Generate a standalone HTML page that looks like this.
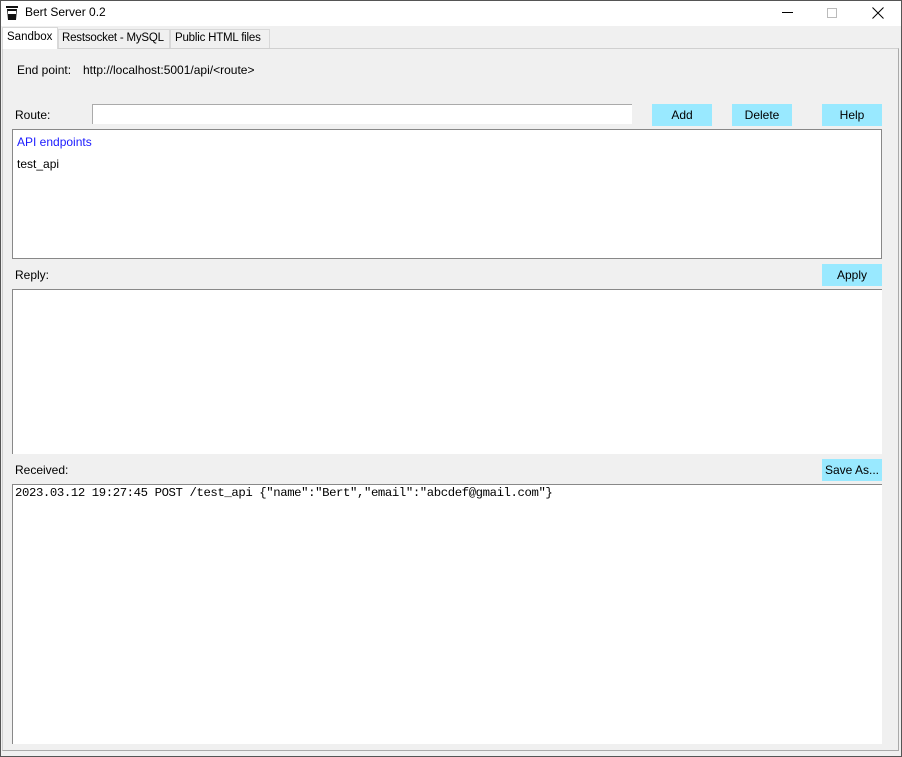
<!DOCTYPE html>
<html><head><meta charset="utf-8"><style>
*{margin:0;padding:0;box-sizing:border-box}
body{width:902px;height:757px;background:#f0f0f0;font-family:"Liberation Sans",sans-serif;font-size:12px;color:#000;position:relative;overflow:hidden}
.a{position:absolute;white-space:nowrap}
.btn{position:absolute;background:#99e9ff;text-align:center;line-height:22px;height:22px;font-size:12px}
</style></head><body>
<div class="a" style="left:0;top:0;width:902px;height:757px;border:1px solid #555"></div>
<div class="a" style="left:1px;top:1px;width:900px;height:25px;background:#fff"></div>
<svg class="a" style="left:5px;top:5px" width="14" height="16" viewBox="0 0 14 16"><path d="M1 1h12v2H1zM2 4h10l-1 11H3z" fill="#111"/><rect x="3" y="6" width="8" height="3" fill="#fff"/></svg>
<div class="a" style="left:25px;top:5px;font-size:12px">Bert Server 0.2</div>
<div class="a" style="left:782px;top:12px;width:11px;height:1px;background:#000"></div>
<div class="a" style="left:827px;top:8px;width:10px;height:10px;border:1px solid #bbb"></div>
<svg class="a" style="left:872px;top:7px" width="12" height="12"><path d="M0.5 0.5L11.5 11.5M11.5 0.5L0.5 11.5" stroke="#000" stroke-width="1"/></svg>
<div class="a" style="left:2px;top:48px;width:897px;height:703px;border:1px solid #d0d0d0;border-right-color:#aaa;border-bottom-color:#aaa"></div>
<div class="a" style="left:2px;top:27px;width:56px;height:22px;background:#fff;border:1px solid #d8d8d8;border-bottom:none;padding:3px 0 0 4px;font-size:11.5px">Sandbox</div>
<div class="a" style="left:58px;top:29px;width:112px;height:19px;border:1px solid #d8d8d8;border-bottom:none;padding:2px 0 0 3px;font-size:11.5px;letter-spacing:-0.2px">Restsocket - MySQL</div>
<div class="a" style="left:170px;top:29px;width:100px;height:19px;border:1px solid #d8d8d8;border-bottom:none;padding:2px 0 0 4px;font-size:11.5px;letter-spacing:-0.2px">Public HTML files</div>
<div class="a" style="left:17px;top:63px">End point:</div>
<div class="a" style="left:83px;top:63px">http://localhost:5001/api/&lt;route&gt;</div>
<div class="a" style="left:15px;top:108px">Route:</div>
<div class="a" style="left:92px;top:104px;width:540px;height:20px;background:#fff;border:1px solid #aaa;border-right:none;border-bottom:none"></div>
<div class="btn" style="left:652px;top:104px;width:60px">Add</div>
<div class="btn" style="left:732px;top:104px;width:60px">Delete</div>
<div class="btn" style="left:822px;top:104px;width:60px">Help</div>
<div class="a" style="left:12px;top:129px;width:870px;height:130px;background:#fff;border:1px solid #888"></div>
<div class="a" style="left:17px;top:135px;color:#1a1aff">API endpoints</div>
<div class="a" style="left:17px;top:157px">test_api</div>
<div class="a" style="left:15px;top:268px">Reply:</div>
<div class="btn" style="left:822px;top:264px;width:60px">Apply</div>
<div class="a" style="left:12px;top:289px;width:870px;height:165px;background:#fff;border-top:1px solid #888;border-left:1px solid #888"></div>
<div class="a" style="left:15px;top:463px">Received:</div>
<div class="btn" style="left:822px;top:459px;width:60px">Save As...</div>
<div class="a" style="left:12px;top:484px;width:870px;height:260px;background:#fff;border-top:1px solid #888;border-left:1px solid #888"></div>
<div class="a" style="left:15px;top:486px;font-family:'Liberation Mono',monospace;font-size:12.3px;letter-spacing:-0.4px">2023.03.12 19:27:45 POST /test_api {"name":"Bert","email":"abcdef@gmail.com"}</div>
</body></html>
